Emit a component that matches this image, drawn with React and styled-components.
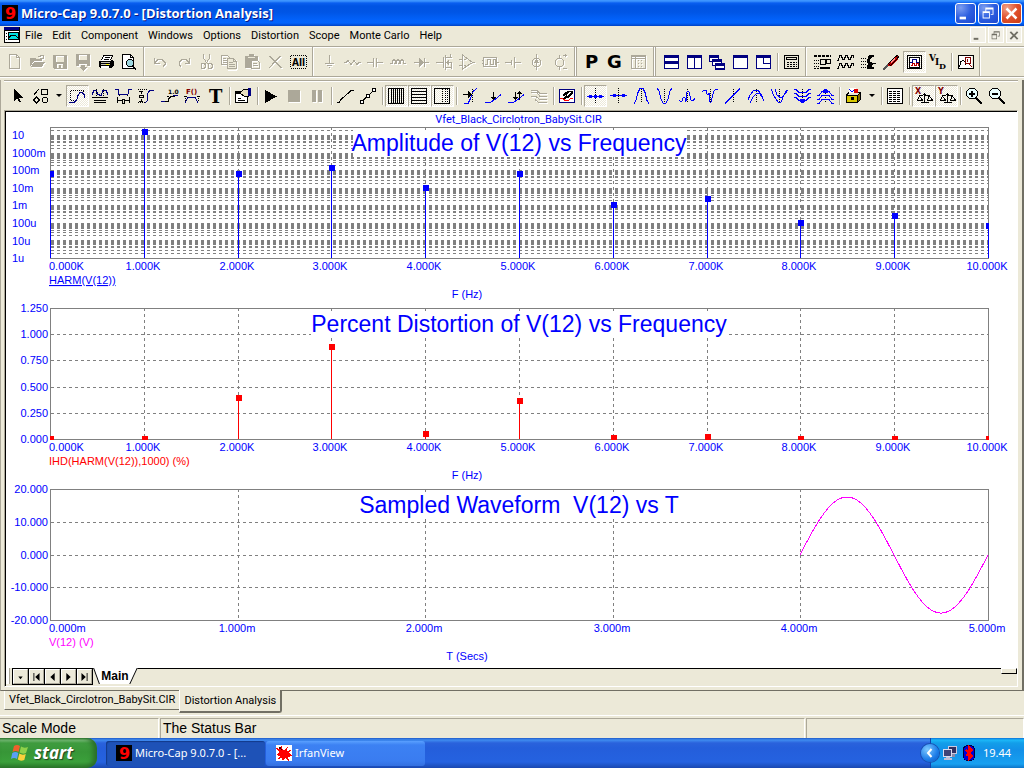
import React from 'react';
import styled, { createGlobalStyle, css } from 'styled-components';

const colors = {
  face: '#ece9d8',
  shadow: '#aca899',
  dark: '#716f64',
  navy: '#000080',
  blue: '#0000ff',
  plot: '#808080',
  red: '#ff0000',
  magenta: '#ff00ff',
  maroon: '#800000',
};

const ui = '"Noto Sans", "Open Sans", sans-serif';
const arial = '"Liberation Sans", Arial, sans-serif';
const narrow = 'Roboto, "Liberation Sans", sans-serif';

/* ---------- icons ---------- */

const line = (d, stroke = 'currentColor', dash) => ({ d, stroke, dash });
const area = (d, fill = 'currentColor') => ({ d, fill });
const label = (text, x, y, size, fill = '#000', family = 'DejaVu Sans') => ({ text, x, y, size, fill, family });

const { navy, blue, maroon } = colors;
const axis = line('M8.5 1v14', '#000', '1 1');

const icons = {
  new: [line('M3.5 .5h7l3 3v11h-10zM10.5 .5v3h3')],
  open: [area('M1 4h5l1 1h6v2H5l-3 5H1z'), area('M5 8h11l-3 5H2z'), line('M9 2.5h2l1-1h2M14.5 .5v4h-4')],
  save: [{ d: 'M1 1h14v14H2l-1-1zM4 2v6h8V2zM5 10v4h2v-3h2v3h2v-4z', fill: 'currentColor' }],
  saveAs: [{ d: 'M1 0h14v12h-3v-2H4v2H1zM4 1v5h8V1z', fill: 'currentColor' }, area('M6 11h4v2h2l-4 4-4-4h2z')],
  print: [
    area('M5 1h9l-2 6H3z', '#fff'), line('M5 1.5h9.5l-2 5M5.5 1.5l-2 5M7 3.5h5M6 5.5h5', '#000'),
    area('M1 7h14v5l-2 2H2l-1-2z', '#000'), line('M3 8.5h9M3 10.5h9', '#c8c4b4'), area('M8 10h3v1H8z', '#ff0'),
    area('M3 12h8v2H3z', '#fff'), line('M13.5 6.5l2 1v4', '#000'),
  ],
  preview: [
    area('M2 1h7l3 3v11H2z', '#fff'), line('M1.5 .5h8l3 3v11h-11zM9.5 .5v3h3', '#000'),
    area('M6 6h4l2 2v3l-2 2H6z', '#9fd8e0'), line('M7.5 5.5h3l2 2v3l-2 2h-3l-2-2v-3z', '#000'),
    line('M12 12l3.500 3.500M11 12l4 4', '#000'),
  ],
  undo: [line('M2.5 4v5h5M3 8.500l3-3h4l3 3v2l-2 2')],
  redo: [line('M14.5 4v5h-5M14 8.500l-3-3H7l-3 3v2l2 2')],
  cut: [line('M5.5 0v4l4 6M11.5 0v4l-4 6M6 9.5l1 1v3l-1 1H4l-1-1v-3l1-1zM13 9.5l1 1v3l-1 1h-2l-1-1v-3l1-1z')],
  copy: [
    line('M.5 1.5h6l2 2v7h-8zM2 4.5h3M2 6.5h4M2 8.5h4'), area('M6 5h9v11H6z', colors.face),
    line('M6.5 4.5h6l3 3v7h-9zM12.5 4.5v3h3M8 8.5h4M8 10.5h6M8 12.5h6'),
  ],
  paste: [
    area('M1 2h4V0h5v2h4v4H7v8H1z'), area('M4 3h7v1H4z', colors.face),
    line('M7.5 6.5h6l2 2v6h-8zM9 9.5h4M9 11.5h5'),
  ],
  del: [line('M2 2l12 12M3 2l12 12M14 2L2 14M13 2L3 13')],
  all: [line('M.5 1.5h16M.5 14.5h16M.5 2v12M16.5 2v12', '#000', '1 1'), label('All', 2, 12, 10, '#000', 'DejaVu Sans Condensed')],

  ground: [line('M8.5 1v8M4 9.5h9M6 11.5h5M8 13.5h1')],
  resistor: [line('M0 8.5h2l2-2 3 4 3-4 3 4 2-2h2')],
  capacitor: [line('M0 8.5h7M10 8.5h6M6.5 4v9M9.5 4v9')],
  inductor: [line('M0 9.500h2l1-3 1-1 1 1 1 3 1-3 1-1 1 1 1 3 1-3 1-1 1 1 1 3h2M5 9l-1 1M9 9l-1 1')],
  diode: [line('M1 8.5h15M11.5 4v9'), area('M6 4l5 4.500-5 4.500z')],
  mosfet: [line('M0 8.5h7M7.5 3v11M9.5 1v15M9 3.5h7M9 13.5h7M10 8.5h5v6M14.5 0v4'), area('M10 8.5l3-3v6z')],
  opamp: [line('M3.5 1v14l10-6.500zM0 5.5h4M0 11.5h4M13 8.5h3M5 5.5h2M5 11.5h2')],
  digital: [line('M1.5 3.5h13v9h-13zM3 10.5h2v-5h3v5h3v-5h2v5M0 6.5h2M0 9.5h2M15 8.5h2')],
  battery: [line('M0 8.5h6M6.5 6v5M9.5 3v11M10 8.5h6')],
  isource: [line('M8.5 0v16M6.5 4.5h4l2 2v4l-2 2h-4l-2-2v-4z'), area('M8.5 5l3 4h-6z')],
  vsource: [line('M8.5 1v3M8.5 13v3M6.5 4.5h4l2 2v4l-2 2h-4l-2-2v-4zM12 1.5h4M14.500 0v3M12 14.5h4')],

  p: [label('P', 1, 14, 18)],
  g: [label('G', 0, 14, 18)],
  sheet: [line('M1.5 1.5h14v13h-14zM2 4.5h13M5.5 2v12M1 2.5h14'), line('M8.500 6v8M11.500 6v8', 'currentColor', '1 2')],
  tileH: [area('M1 1h15v14H1z', navy), area('M2 4h13v3H2zM2 10h13v4H2z', '#fff')],
  tileV: [area('M1 1h15v14H1z', navy), area('M2 4h6v10H2zM9 4h6v10H9z', '#fff')],
  cascade: [
    area('M0 1h10v7H0z', navy), area('M1 4h8v3H1z', '#fff'), area('M3 5h10v7H3z', navy),
    area('M4 8h8v3H4z', '#fff'), area('M6 9h10v7H6z', navy), area('M7 12h8v2H7z', '#fff'),
  ],
  maximize: [area('M1 1h15v14H1z', navy), area('M2 4h13v10H2z', '#fff')],
  corner: [area('M1 1h15v14H1z', navy), area('M2 4h13v10H2z', '#fff'), line('M8.5 4v5h7', navy)],
  calc: [
    line('M1.5 1.5h14v13h-14z', '#000'), line('M3.500 3.500h10v2h-10z', '#000'),
    line('M4 8.5h10M4 10.5h10M4 12.5h10', '#000', '2 1'),
  ],
  partList: [
    line('M0 1.500h17M0 2.500h17', '#000', '3 1'), line('M0 6.500h5M0 9.500h5M0 12.500h5', '#000', '1 1'), area('M6 5h6v6H6z', '#000'),
    area('M7 6h4v4H7z', colors.face), line('M12.500 5.500h4v4h-4zM6 13.500h10M6 14.500h10', '#000'), line('M0 14.500h5', '#000', '2 1'),
  ],
  waves: [
    line('M0 6.500h1l2-5h1l2 4h1l2-4h1l2 4h1l2-4h1l1 2', '#000'),
    line('M0 14.500h1l2-5h1l2 4h1l2-4h1l2 4h1l2-4h1l1 2', '#000'),
  ],
  faucet: [
    line('M1 4.500h5M1 7.500h5M1 10.500h5M1 13.500h5', '#000', '1 1'),
    area('M8 2l2-1h4v2h-2l-2 2v3l3 1h3v1h-3l-1 1v2h2v2H7v-3l1-2-1-2z', '#000'),
  ],
  screwdriver: [
    line('M0 15.500l6-6M1 15.500l6-6', '#555'), area('M5 9l7-7h3v3l-7 7H5z', '#c00000'),
    line('M5.500 9.500l7-7 2-1 1 1-1 2-7 7z', '#000'), line('M8 8.500l4-4', '#ff9090'),
  ],
  scope: [
    line('M1.5 1.5h14v13h-14z', '#000'), line('M3.500 3.500h10v10h-10z', '#000'), area('M4 4h9v9H4z', '#fff'),
    line('M4 8.500h2v-3h4v3h3', navy), line('M5 11.500h1v-2h2v2h2v-2h2v2', '#c00000'),
  ],
  vid: [
    label('V', 0, 7, 9, '#000', 'DejaVu Serif'), label('I', 6, 11, 9, '#000', 'DejaVu Serif'),
    label('D', 10, 15, 8, '#000', 'DejaVu Serif'),
  ],
  zoomWave: [
    area('M2 2h13v12H2z', '#fff'), line('M1.5 1.5h15v13h-15z', '#000'),
    line('M2 12.500l1-1 1-4 2-1 2 1v3', '#000'), line('M8.500 3.500h5v6h-5zM10.500 5v3M12 10l3 3', maroon),
  ],

  pointer: [area('M5 1v12l3-3 2 4h2l-2-4.500h4z', '#000')],
  shapes: [line('M1.5 7.500l5-6M9.500 1.500h6v5h-6zM4.500 9l3 3-3 3-3-3zM11.500 9.500h3l1 1v3l-1 1h-3l-1-1v-3z', '#000')],
  scaleMode: [
    line('M1.500 3v9M2 2.500h13M14.500 3v3M2 12.500h4', '#000', '1 1'),
    line('M0 14.500h5l3-3 1-4 2-3h2l2 2 1 3', navy),
  ],
  cursorMode: [
    line('M0 6.500l2-4h2l2 4 3 1 2-5h3l2 4', navy), line('M4.500 1v7M11.500 1v7', '#000', '1 1'),
    line('M0 9.500h16M2 12.500h12M2 14.500h12', '#000'),
  ],
  horzTag: [
    line('M0 1.500h3l1 5h9l1-5h3', navy), line('M2.500 9v6M14.500 9v6M3 12.500h4M10 12.500h4', '#000'),
    line('M7.500 11v4h2v-4z', '#000'), line('M4.500 7v2M12.500 7v2', '#000', '1 1'),
  ],
  vertTag: [
    line('M7 15l2-2 1-8 2-3h4', navy), line('M0 1.500h10M0 14.500h8', '#000', '1 1'),
    line('M1 3.500h4M3.500 3v3M3.500 11v3M1 13.500h4M1.500 7.500h4v2h-4z', '#000'),
  ],
  slope: [label('1.0', 7, 6, 6), line('M0 13.500h4M12 7.500h5', navy), line('M4 13.500h3v-2l3-3h4M8 8.500h-2', '#000')],
  funcTag: [
    label('F()', 2, 6, 7, maroon), line('M1 14.500l3-5h7l3 5', navy), line('M0 8h3M13 8h3M1.500 8v6M14.500 8v6', '#000', '1 1'),
  ],
  text: [label('T', 2, 15, 18, '#000', 'DejaVu Serif')],
  properties: [
    area('M1 4h12v11H1z', '#fff'), line('M.5 3.500h12v11H.5zM3 12.500h7M3 10.500h3', '#000'), area('M1 4h11v2H1z', '#000'),
    area('M6 3l3-2h5v7H9L6 7z', '#e8e0c0'), line('M5 5l3-3 5-1v7H9l-3-2', '#000'), area('M13 0h3v8h-3z', navy),
  ],
  play: [area('M2 2l12 6.500L2 15z', '#000')],
  stop: [area('M2 2h12v12H2z')],
  pause: [area('M3 2h4v12H3zM9 2h4v12H9z')],
  segment: [line('M0 14.500h2l2-3 8-7 2-2h3', '#000')],
  segmentDots: [
    line('M2 13.500l5-5 8-7', '#000'), area('M0 12h4v4H0zM6 6h4v4H6zM12 0h4v4h-4z', '#000'),
    area('M1 13h2v2H1zM7 7h2v2H7zM13 1h2v2h-2z', '#fff'),
  ],
  gridV: [line('M.5 .5h15v15H.5z', '#000'), line('M3.500 1v14M5.500 1v14M7.500 1v14M9.500 1v14M11.500 1v14M13.500 1v14', '#000')],
  gridH: [line('M.5 .5h15v15H.5z', '#000'), line('M1 3.500h14M1 6.500h14M1 9.500h14M1 12.500h14', '#000')],
  gridDots: [line('M.5 .5h15v15H.5z', '#000'), line('M8.500 1v14M11.500 1v14M13.500 1v14', '#000', '1 1')],
  cursorFind: [
    line('M2 15.500h4l2-4 3-8 4-3', blue), line('M10.500 1v14', '#000', '1 1'),
    line('M1 6.500h7', '#000'), area('M6 3l4 3.500L6 10z', '#000'),
  ],
  cursorSnap: [line('M0 14.500h5l5-3 6-5', blue), line('M8.500 4v7', '#000'), area('M6 9h5l-2.500 3z', '#000')],
  cursorPair: [line('M0 14.500h5l5-3 6-5', blue), line('M7.500 4v7M11.500 4v8', '#000'), area('M5 9h5l-2.500 3zM9 6h5l-2.500-3z', '#000')],
  runs: [line('M0 2.500h6l3 3h7M0 4.500h6l3 4h7M0 8.500h5l4 3h7M4 11.500l4 3h8')],
  pan: [
    area('M1 2h14v12H1z', '#fff'), line('M.5 1.500h15v13H.5z', navy),
    line('M1 10.500h3l2 2h3l3-2h2', '#f00'), area('M4 6l5-3h5v2l-4 5-6 1 3-4-3 1z', '#000'), area('M7 7l4-3h1L9 8z', '#fff'),
  ],
  dataPoint: [line('M8.5 0v16', '#000', '1 1'), line('M0 8.500h17', blue), area('M2 7h3v3H2zM7 7h3v3H7zM12 7h3v3h-3z', blue)],
  dataPoint2: [line('M8.5 0v16', '#000', '1 1'), line('M0 7.500h17', blue), area('M3 6h3v3H3zM12 6h3v3h-3z', blue)],
  peak: [axis, line('M1 15.500l2-3 2-8 2-4h3l2 4 2 8 2 3', blue)],
  valley: [axis, line('M1 0l2 3 2 8 2 4h3l2-4 2-8 2-3', blue)],
  high: [axis, line('M0 12l1 1h2l1-3 1-1 1 1v3h1l1-9 1-1 1 1 2 8 2 1 2-3', blue)],
  low: [axis, line('M0 4l2-2h2l1 4 1 1 1-2 1 9h1l2-8 1-3 2-2h2', blue)],
  inflection: [axis, line('M0 15.500l15-15', blue)],
  globalHigh: [axis, line('M0 12l2-5 4-5h4l3 4 3 7M2 15l3-6 4-4h2l4 5', blue)],
  globalLow: [axis, line('M0 1l3 7 4 6h3l3-7 3-5M4 1l2 6 4 3 3-3 4-5', blue)],
  bottom: [axis, line('M0 1.500h2l3 3h7l3-3h2M0 5.500h2l3 3h7l3-3h2M0 9.500h2l3 3h7l3-3h2', blue), area('M6 11h5v2l-1 2H7l-1-2z', blue)],
  top: [axis, line('M0 7.500h2l3-4h7l3 4h2M0 11.500h2l3-4h7l3 4h2M0 15.500h2l3-4h7l3 4h2', blue), area('M7 1h3l1 2v2H6V3z', blue)],
  toolbox: [
    area('M1 7h11v8H1z', '#d8c800'), line('M1.500 7.500h11v7h-11zM12.500 7.500l3-3v7l-3 3M1 7.500l3-3h11', '#000'),
    area('M13 7l2-2v6l-2 2z', '#806c00'), area('M4 0h7v5H4z', '#fff'), line('M4 1l3 3 3-3', blue), area('M9 1h4v4H9z', '#e00000'),
    area('M6 9h3v3H6z', '#000'),
  ],
  numeric: [
    area('M1 1h15v14H1z', '#fff'), line('M.5 .5h15v15H.5z', '#000'),
    line('M2 3.500h12M2 5.500h12M2 7.500h12M2 9.500h12M2 11.500h12M2 13.500h12', '#000', '3 1'),
  ],
  scaleX: [label('X', 0, 6, 8, maroon), line('M9.500 5v9M6 14.500h8M4 8.500l5-2 6 2M4.500 8l-2 4h5zM14.500 8l-2 4h5z', '#000')],
  scaleY: [label('Y', 0, 6, 8, maroon), line('M9.500 5v9M6 14.500h8M4 8.500l5-2 6 2M4.500 8l-2 4h5zM14.500 8l-2 4h5z', '#000')],
  zoomIn: [
    area('M3 1h6l2 3v4l-2 3H3L1 8V4z', '#e8ffff'), line('M3.500 .5h5l3 3v4l-3 3h-5l-3-3v-4zM3 5.500h6M3 6.500h6M5.500 3v6M6.500 3v6', '#000'),
    line('M10 9l6 6M9 10l6 6M10 10l6 6', '#000'),
  ],
  zoomOut: [
    area('M3 1h6l2 3v4l-2 3H3L1 8V4z', '#e8ffff'), line('M3.500 .5h5l3 3v4l-3 3h-5l-3-3v-4zM3 5.500h6M3 6.500h6', '#000'),
    line('M10 9l6 6M9 10l6 6M10 10l6 6', '#000'),
  ],
};

const Glyph = ({ name }) => (
  <Svg16 viewBox="0 0 16 16" aria-hidden="true">
    {icons[name].map((p, i) =>
      p.text ? (
        <text key={i} x={p.x} y={p.y} fontSize={p.size} fill={p.fill} fontFamily={p.family} fontWeight="700">{p.text}</text>
      ) : (
        <path key={i} d={p.d} fill={p.fill || 'none'} fillRule="evenodd" stroke={p.stroke || 'none'} strokeDasharray={p.dash} />
      )
    )}
  </Svg16>
);

/* ---------- toolbars: "|" separator, "||" band edge, "|||" gap between bands, "v" drop arrow ---------- */

const mainTools = [
  '-new', '-open', '-save', '-saveAs', 'print', 'preview', '||',
  '-undo', '-redo', '-cut', '-copy', '-paste', '-del', 'all', '||',
  '-ground', '-resistor', '-capacitor', '-inductor', '-diode', '-mosfet', '-opamp', '-digital', '-battery', '-isource', '-vsource', '|||',
  'p', 'g', '-sheet', '|||',
  'tileH', 'tileV', 'cascade', 'maximize', 'corner', '|', 'calc', '||',
  'partList', 'waves', 'faucet', 'screwdriver', '+scope', 'vid', '|', 'zoomWave', '||',
];

const plotTools = [
  'pointer', 'shapes', 'v', '+scaleMode', 'cursorMode', 'horzTag', 'vertTag', 'slope', 'funcTag', 'text', '|',
  'properties', '|', 'play', '-stop', '-pause', '|', 'segment', 'segmentDots', '|',
  '+gridV', '+gridH', '+gridDots', '|', 'cursorFind', 'cursorSnap', 'cursorPair', '-runs', '|', 'pan', '|',
  '+dataPoint', 'dataPoint2', 'peak', 'valley', 'high', 'low', 'inflection', 'globalHigh', 'globalLow', 'bottom', 'top', '|',
  'toolbox', 'v', '|', 'numeric', '|', '+scaleX', '+scaleY', '|', 'zoomIn', 'zoomOut',
];

const Tools = ({ items }) => items.map((item, i) => {
  if (item === '|||') return <BandGap key={i} />;
  if (item === '||') return <BandEdge key={i} />;
  if (item === '|') return <Separator key={i} />;
  if (item === 'v') return <DropArrow key={i} aria-label="More" />;
  const off = item[0] === '-';
  const on = item[0] === '+';
  const name = off || on ? item.slice(1) : item;
  return (
    <ToolButton key={i} aria-label={name} aria-pressed={on} disabled={off} $on={on}>
      <Glyph name={name} />
    </ToolButton>
  );
});

/* ---------- charts ---------- */

const LEFT = 44;
const WIDTH = 938;
const HEIGHT = 131;
const kilo = Array.from({ length: 11 }, (_, i) => `${i}.000K`);
const milli = Array.from({ length: 6 }, (_, i) => `${i}.000m`);

// minor and major lines of the seven and a half decades
const decadeLines = [];
for (let d = 0; d < 8; d++) {
  for (let m = 1; m < 10; m++) {
    const y = Math.ceil(HEIGHT - 17.5 * (d + Math.log10(m)) - 0.5);
    if (y > 1 && y < HEIGHT) decadeLines.push(y);
  }
}

const sine = Array.from({ length: 189 }, (_, i) => `${LEFT + 750 + i},${(66 - 58 * Math.sin((i / 188) * 2 * Math.PI)).toFixed(1)}`).join(' ');

const charts = [
  {
    title: 'Amplitude of V(12) vs Frequency',
    cover: 332,
    lines: decadeLines,
    ticks: kilo,
    labels: ['10', '1000m', '100m', '10m', '1m', '100u', '10u', '1u'].map((t, i) => [t, Math.round(8 + i * 17.6)]),
    anchor: 'start',
    color: colors.blue,
    points: [47, 5, 47, 41, 61, 47, 78, 72, 96, 89, 99],
    legend: 'HARM(V(12))',
    selected: true,
    unit: 'F (Hz)',
  },
  {
    title: 'Percent Distortion of V(12) vs Frequency',
    cover: 416,
    lines: [26, 52, 79, 105],
    ticks: kilo,
    labels: [['1.250', 0], ['1.000', 26], ['0.750', 52], ['0.500', 79], ['0.250', 105], ['0.000', 131]],
    anchor: 'end',
    color: colors.red,
    points: [131, 131, 90, 39, 126, 93, 130, 129, 131, 131, 131],
    legend: 'IHD(HARM(V(12)),1000) (%)',
    unit: 'F (Hz)',
  },
  {
    title: 'Sampled Waveform\u00a0 V(12) vs T',
    cover: 320,
    lines: [33, 66, 98],
    ticks: milli,
    labels: [['20.000', 0], ['10.000', 33], ['0.000', 66], ['-10.000', 98], ['-20.000', 131]],
    anchor: 'end',
    color: colors.magenta,
    wave: sine,
    legend: 'V(12) (V)',
    unit: 'T (Secs)',
  },
];

const Chart = ({ id, data }) => {
  const last = data.ticks.length - 1;
  const tickX = i => LEFT + Math.round((WIDTH / last) * i);
  return (
    <Plot viewBox="0 0 1011 178" role="img" aria-label={data.title}>
      <clipPath id={id}><rect x={LEFT} y="0" width={WIDTH + 1} height={HEIGHT + 1} /></clipPath>
      <g stroke={colors.plot} fill="none">
        {data.lines.map(y => <path key={y} d={`M${LEFT + 1} ${y + 0.5}h${WIDTH}`} strokeDasharray="3 3" />)}
        {data.ticks.slice(1, -1).map((t, i) => <path key={t} d={`M${tickX(i + 1) + 0.5} 0v${HEIGHT}`} strokeDasharray="3 3" />)}
        <rect x={LEFT + 0.5} y="0.5" width={WIDTH} height={HEIGHT} />
      </g>
      <rect x={513 - data.cover / 2} y="3" width={data.cover} height="27" fill="#fff" />
      <g clipPath={`url(#${id})`}>
        {data.points && data.points.map((y, i) => (
          <g key={i} fill={data.color}>
            <rect x={tickX(i)} y={y} width="1" height={HEIGHT - y} />
            <rect x={tickX(i) - 2} y={y - 3} width="6" height="6" />
          </g>
        ))}
        {data.wave && <polyline points={data.wave} fill="none" stroke={data.color} />}
      </g>
      <PlotTitle x="513" y="24">{data.title}</PlotTitle>
      {data.labels.map(([t, y]) => (
        <PlotText key={t} x={data.anchor === 'end' ? 42 : 6} y={y + 4} $anchor={data.anchor}>{t}</PlotText>
      ))}
      {data.ticks.map((t, i) => (
        <PlotText key={t} x={i ? tickX(i) - 1 : LEFT - 1} y="143" $anchor={i ? 'middle' : 'start'}>{t}</PlotText>
      ))}
      <PlotText x={LEFT - 1} y="157" $color={data.color} $underline={data.selected}>{data.legend}</PlotText>
      <PlotText x="461" y="171" $anchor="middle">{data.unit}</PlotText>
    </Plot>
  );
};

/* ---------- page ---------- */

const menu = ['File', 'Edit', 'Component', 'Windows', 'Options', 'Distortion', 'Scope', 'Monte Carlo', 'Help'];

const controls = [
  ['Minimize', 'M4 14h7v3H4z'],
  ['Restore', 'M7 4h9v8h-3v-1h2V6H8v2H7zM4 8h8v8H4zM5 10v5h6v-5z'],
  ['Close', 'M4 6l2-2 4.500 4.500L15 4l2 2-4.500 4.500L17 15l-2 2-4.500-4.500L6 17l-2-2 4.500-4.500z'],
];

const sheetNav = [
  ['Sheets', 'M5 7h5l-2.500 3z'],
  ['First', 'M4 3h1v9H4zM11 3v9L6 7.500z'],
  ['Previous', 'M10 3v9L5 7.500z'],
  ['Next', 'M5 3v9l5-4.500z'],
  ['Last', 'M4 3v9l5-4.500zM10 3h1v9h-1z'],
];

const AppIcon = () => (
  <Svg16 viewBox="0 0 16 16" aria-hidden="true">
    <rect width="16" height="16" fill="#000" />
    <text x="3" y="14" fontSize="16" fontWeight="700" fontFamily="DejaVu Sans" fill="#f00">9</text>
  </Svg16>
);

const App = () => (
  <Desktop>
    <GlobalStyle />
    <TitleBar>
      <AppIcon />
      <WindowTitle>Micro-Cap 9.0.7.0 - [Distortion Analysis]</WindowTitle>
      {controls.map(([name, d]) => (
        <WindowButton key={name} aria-label={name} $close={name === 'Close'}>
          <svg width="19" height="19" viewBox="0 0 21 21"><path d={d} fill="#fff" fillRule="evenodd" /></svg>
        </WindowButton>
      ))}
    </TitleBar>

    <MenuBar>
      <Svg16 viewBox="0 0 16 16" aria-hidden="true">
        <rect width="16" height="16" fill="#000" />
        <rect x="0" y="0" width="15" height="3" fill={navy} />
        <rect x="1" y="4" width="14" height="11" fill="#fff" />
        <path d="M2 6h1v1H2zM2 9h1v1H2zM2 12h1v1H2z" fill="#000" />
        <rect x="4" y="5" width="11" height="8" fill="#00e0e0" />
        <path d="M4.500 5.500h10v7h-10zM5 10.500l2-2h4l3 2" fill="none" stroke="#000" />
      </Svg16>
      <MenuItems>
        {menu.map(item => <MenuItem key={item}>{item}</MenuItem>)}
      </MenuItems>
      {controls.map(([name, d]) => (
        <ChildButton key={name} aria-label={`${name} child`}>
          <svg width="15" height="15" viewBox="0 0 21 21"><path d={d} fill={colors.dark} fillRule="evenodd" /></svg>
        </ChildButton>
      ))}
    </MenuBar>

    <MainToolbar><Tools items={mainTools} /></MainToolbar>

    <Child>
      <PlotToolbar><Tools items={plotTools} /></PlotToolbar>
      <Sheet>
        <Canvas>
          <FileName>Vfet_Black_Circlotron_BabySit.CIR</FileName>
          {charts.map((data, i) => <Chart key={data.title} id={`plot${i}`} data={data} />)}
        </Canvas>
        <SheetRow>
          <Grip />
          <SheetNav>
            {sheetNav.map(([name, d]) => (
              <NavButton key={name} aria-label={name}>
                <svg width="14" height="14" viewBox="0 0 15 15"><path d={d} /></svg>
              </NavButton>
            ))}
          </SheetNav>
          <SheetTab><span>Main</span></SheetTab>
          <SheetFill />
          <SplitBox />
        </SheetRow>
      </Sheet>
    </Child>

    <DocTabs>
      <DocTab>Vfet_Black_Circlotron_BabySit.CIR</DocTab>
      <DocTab $active>Distortion Analysis</DocTab>
    </DocTabs>

    <StatusBar>
      <StatusPanel>Scale Mode</StatusPanel>
      <StatusPanel>The Status Bar</StatusPanel>
      <StatusPanel />
    </StatusBar>

    <Taskbar>
      <StartButton>
        <svg width="18" height="18" viewBox="0 0 18 18" aria-hidden="true">
          <path d="M3 2q3-2 6 0l-1.500 6q-3-2-6 0z" fill="#f0602c" />
          <path d="M10 2.500q3 2 7 .5l-2 6q-3 1.500-6.500-.5z" fill="#8fd14a" />
          <path d="M1.300 9q3-2 6 0L6 15q-3-2-6 0z" fill="#5aa0f4" />
          <path d="M8.300 9.500q3 2 6.500.5l-1.500 6q-4 1.500-6.500-.5z" fill="#fbd13c" />
        </svg>
        start
      </StartButton>
      <Task $active><AppIcon />Micro-Cap 9.0.7.0 - [...</Task>
      <Task>
        <Svg16 viewBox="0 0 16 16" aria-hidden="true">
          <rect width="16" height="16" fill="#fff" />
          <path d="M7 5L5 0 4 4 0 3l3 4-3 3 4 1-2 3 4-1 1 3 2-3 4 3-1-4 4-1-3-3 2-3-4 1 1-5-3 4z" fill="#f00" />
          <path d="M3 2h2v2H3zM5 4h1v1H5z" fill="#300" />
        </Svg16>
        IrfanView
      </Task>
      <Tray>
        <TrayToggle aria-label="Show hidden icons">
          <svg width="18" height="18" viewBox="0 0 18 18"><path d="M10.500 5L7 9l3.500 4" fill="none" stroke="#fff" strokeWidth="2" /></svg>
        </TrayToggle>
        <Svg16 viewBox="0 0 16 16" aria-hidden="true">
          <path d="M6 1h9v8H6z" fill="#c8c8e0" /><path d="M7 2h7v6H7z" fill="#303060" /><path d="M9 9h4v3H9z" fill="#8888a8" />
          <path d="M1 4h9v8H1z" fill="#dcdcf0" /><path d="M2 5h7v6H2z" fill="#404478" /><path d="M4 12h4v1h2v2H2v-2h2z" fill="#c0c0d8" />
        </Svg16>
        <Svg16 viewBox="0 0 16 16" aria-hidden="true">
          <rect x="2.500" y=".5" width="11" height="15" rx="4" fill="#0000d8" stroke="#000040" />
          <path d="M5 5l6 6-3 3V2l3 3-6 6" fill="none" stroke="#f00" strokeWidth="2" />
        </Svg16>
        <Clock>19.44</Clock>
      </Tray>
    </Taskbar>
  </Desktop>
);

const GlobalStyle = createGlobalStyle`
  body {
    margin: 0;
    background: ${colors.face};
  }
  button {
    margin: 0;
    padding: 0;
    border: 0;
    background: none;
    color: inherit;
    font: inherit;
  }
`

const Desktop = styled.div`
  display: flex;
  flex-direction: column;
  min-height: 100vh;
  background: ${colors.face};
  font: 11px/14px ${ui};
  color: #000;
`

const Svg16 = styled.svg`
  flex: none;
  width: 16px;
  height: 16px;
  overflow: visible;
  shape-rendering: crispEdges;
`

const TitleBar = styled.header`
  display: flex;
  align-items: center;
  gap: 2px;
  height: 26px;
  padding: 0 2px;
  box-sizing: border-box;
  background: linear-gradient(#3d95ff 0, #3d95ff 1px, #0a5ff0 3px, #0054e3 6px, #0055e5 12px, #0262fb 20px, #0164fd 23px, #0042c4 26px);
`

const WindowTitle = styled.h1`
  flex: 1;
  margin: 0;
  padding-left: 1px;
  font: 700 13px/18px "Open Sans", sans-serif;
  color: #fff;
  text-shadow: 1px 1px 0 #0a1883;
  white-space: nowrap;
`

const WindowButton = styled.button`
  display: flex;
  width: 21px;
  height: 21px;
  border: 1px solid #fff;
  border-radius: 3px;
  box-sizing: border-box;
  background: ${p => (p.$close
    ? 'radial-gradient(circle at 25% 20%, #f0a088, #e0502c 50%, #c83c14)'
    : 'radial-gradient(circle at 25% 20%, #7c9df0, #2c5ee0 50%, #1c48d0)')};
`

const MenuBar = styled.nav`
  display: flex;
  align-items: center;
  height: 20px;
  padding: 0 2px 2px 4px;
  box-sizing: border-box;
`

const MenuItems = styled.div`
  flex: 1;
  display: flex;
  font-family: ${narrow};
`

const MenuItem = styled.button`
  padding: 2px 5px 0;
  line-height: 16px;
`

const ChildButton = styled.button`
  display: flex;
  align-items: center;
  justify-content: center;
  width: 16px;
  height: 16px;
  margin-left: 2px;
  border: 1px solid #fff;
  box-sizing: border-box;
  background: #f2f0e6;
`

const toolbar = css`
  display: flex;
  box-sizing: border-box;
  overflow: hidden;
`

const MainToolbar = styled.div`
  ${toolbar}
  height: 31px;
  padding-left: 3px;
  border-top: 1px solid ${colors.shadow};
  border-bottom: 1px solid ${colors.shadow};
  box-shadow: inset 0 1px #fff, 0 1px #fff;
`

const PlotToolbar = styled.div`
  ${toolbar}
  height: 30px;
  padding-left: 2px;
  border-top: 1px solid ${colors.shadow};
  box-shadow: inset 0 1px #fff;
`

const ToolButton = styled.button`
  flex: none;
  align-self: center;
  display: flex;
  align-items: center;
  width: 23px;
  height: 22px;
  padding-left: 3px;
  color: ${colors.shadow};
  &:disabled svg {
    filter: drop-shadow(1px 1px 0 #fff);
  }
  ${p => p.$on && css`
    padding-left: 2px;
    border: 1px solid;
    border-color: ${colors.shadow} #fff #fff ${colors.shadow};
    box-sizing: border-box;
    background: repeating-conic-gradient(#fff 0 25%, ${colors.face} 0 50%) 0 0 / 2px 2px;
  `}
`

const Separator = styled.span`
  flex: none;
  align-self: center;
  width: 0;
  height: 18px;
  margin: 0 1px 0 2px;
  border-left: 1px solid ${colors.shadow};
  border-right: 1px solid #fff;
`

const BandEdge = styled.span`
  flex: none;
  margin: 0 4px 0 2px;
  border-left: 1px solid ${colors.shadow};
  border-right: 1px solid #fff;
`

const BandGap = styled.span`
  flex: none;
  width: 1px;
  margin: 0 4px 0 3px;
  border-left: 1px solid ${colors.shadow};
  border-right: 1px solid ${colors.shadow};
  background: #fff;
`

const DropArrow = styled.button`
  flex: none;
  width: 14px;
  &::before {
    content: '';
    display: block;
    width: 0;
    margin: 0 auto;
    border: 3px solid transparent;
    border-top-color: #000;
    border-bottom: 0;
  }
`

const Child = styled.main`
  flex: 1;
  display: flex;
  flex-direction: column;
  margin-top: 3px;
  padding: 0 4px 3px 3px;
  border: solid ${colors.dark};
  border-width: 0 2px 1px 0;
  border-left: 1px solid ${colors.shadow};
`

const Sheet = styled.section`
  flex: 1;
  display: flex;
  flex-direction: column;
  border: 1px solid;
  border-color: ${colors.shadow} #fff #fff ${colors.shadow};
`

const Canvas = styled.div`
  flex: 1;
  display: flex;
  flex-direction: column;
  gap: 3px;
  border-top: 1px solid #000;
  border-left: 1px solid #000;
  background: #fff;
`

const FileName = styled.div`
  margin-bottom: -3px;
  padding: 1px 0 0 14px;
  font: 11px/14px ${narrow};
  text-align: center;
  color: ${colors.blue};
`

const Plot = styled.svg`
  display: block;
  width: 100%;
  overflow: visible;
  shape-rendering: crispEdges;
`

const PlotTitle = styled.text`
  font: 23px ${arial};
  text-anchor: middle;
  fill: ${colors.blue};
  white-space: pre;
`

const PlotText = styled.text`
  font: 11px ${arial};
  text-anchor: ${p => p.$anchor || 'start'};
  fill: ${p => p.$color || colors.blue};
  text-decoration: ${p => (p.$underline ? 'underline' : 'none')};
`

const SheetRow = styled.div`
  display: flex;
  height: 18px;
  border-left: 1px solid #000;
`

const Grip = styled.span`
  width: 4px;
  height: 16px;
  margin-right: 2px;
  border-right: 1px solid ${colors.shadow};
  box-sizing: border-box;
  background: #fff;
`

const SheetNav = styled.div`
  display: flex;
  gap: 1px;
  height: 15px;
  padding: 1px;
  background: #000;
`

const NavButton = styled.button`
  display: flex;
  width: 15px;
  height: 15px;
  border: 1px solid;
  border-color: #fff ${colors.shadow} ${colors.shadow} #fff;
  box-sizing: border-box;
  background: ${colors.face};
`

const SheetTab = styled.button`
  position: relative;
  width: 44px;
  height: 16px;
  font: 700 12px/16px ${arial};
  &::before,
  &::after {
    content: '';
    position: absolute;
    top: 0;
    bottom: 0;
    background: #fff;
  }
  &::before {
    left: 3px;
    right: 16px;
    border-left: 1px solid #000;
    transform: skewX(20deg);
  }
  &::after {
    left: 16px;
    right: 3px;
    border-right: 1px solid #000;
    transform: skewX(-25deg);
  }
  > span {
    position: relative;
    z-index: 1;
  }
`

const SheetFill = styled.span`
  flex: 1;
  border-top: 1px solid #000;
`

const SplitBox = styled.span`
  width: 14px;
  height: 4px;
  border: 1px solid;
  border-color: #fff #000 #000 #fff;
  background: ${colors.face};
`

const DocTabs = styled.div`
  display: flex;
  align-items: flex-start;
  height: 24px;
  padding-left: 4px;
  border-bottom: 1px solid #fff;
  font-family: ${narrow};
`

const DocTab = styled.button`
  height: 18px;
  padding: 0 4px;
  border-bottom: 1px solid ${colors.dark};
  border-left: 1px solid #fff;
  box-sizing: content-box;
  ${p => p.$active && css`
    height: 21px;
    margin-top: -1px;
    border-right: 2px solid ${colors.dark};
    border-bottom-width: 2px;
    border-radius: 0 0 3px 0;
    background: ${colors.face};
  `}
`

const StatusBar = styled.footer`
  display: grid;
  grid-template-columns: 159px 1fr 218px;
  gap: 1px;
  height: 20px;
  margin-top: 2px;
  font: 14px/19px ${arial};
`

const StatusPanel = styled.div`
  padding-left: 2px;
  border: 1px solid;
  border-color: ${colors.shadow} #fff #fff ${colors.shadow};
  box-sizing: border-box;
  &:first-child {
    border-left: 0;
  }
`

const Taskbar = styled.div`
  display: flex;
  align-items: center;
  height: 30px;
  background: linear-gradient(#1f5ac8 0, #3f8cf0 2px, #2a62dc 5px, #245edb 10px, #2562e0 24px, #1a48b0 30px);
  color: #fff;
`

const StartButton = styled.button`
  display: flex;
  align-items: center;
  gap: 5px;
  width: 97px;
  height: 30px;
  margin-right: 9px;
  padding-left: 11px;
  box-sizing: border-box;
  border-radius: 0 10px 10px 0;
  background: linear-gradient(#2f7a2f 0, #7cc07c 2px, #3f9c3f 5px, #379637 14px, #3ba03b 24px, #2a7a2a 30px);
  box-shadow: inset -4px 0 5px #2a6e2a;
  font: italic 700 17px/24px "Open Sans", sans-serif;
  text-shadow: 1px 1px 1px #204020;
`

const Task = styled.button`
  display: flex;
  align-items: center;
  gap: 3px;
  width: 159px;
  height: 25px;
  margin-right: 1px;
  padding: 0 10px;
  border-radius: 3px;
  box-sizing: border-box;
  background: ${p => (p.$active ? '#1e52b7' : 'linear-gradient(#5aa0ff, #3c81f3 4px, #3a7cf0 20px, #3470e0)')};
  box-shadow: ${p => (p.$active ? 'inset 1px 1px 1px #123a8a' : 'none')};
  white-space: nowrap;
`

const Tray = styled.div`
  display: flex;
  align-items: center;
  gap: 3px;
  height: 30px;
  margin-left: auto;
  padding-right: 13px;
  border-left: 1px solid #1042af;
  background: linear-gradient(#0c70d8 0, #1cb8f8 2px, #139ee9 5px, #1290e8 12px, #18a0f0 26px, #0d74c8 30px);
`

const TrayToggle = styled.button`
  display: flex;
  width: 18px;
  height: 18px;
  margin-left: -10px;
  border-radius: 50%;
  background: radial-gradient(circle at 35% 30%, #7cc8ff, #1c7ce8 60%, #0a50b8);
  box-shadow: 0 0 0 1px #1a50b0;
`

const Clock = styled.time`
  padding-left: 3px;
`

export default App;
